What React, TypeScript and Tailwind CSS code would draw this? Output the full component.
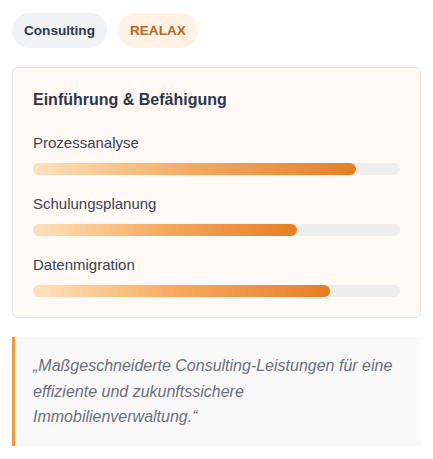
import React from "react";

const skills = [
  { name: "Prozessanalyse", value: 88 },
  { name: "Schulungsplanung", value: 72 },
  { name: "Datenmigration", value: 81 },
];

export default function App() {
  return (
    <div className="w-[433px] min-h-[459px] bg-white px-3 pt-[13px] font-['Liberation_Sans',Arial,sans-serif]">
      <div className="flex gap-[11px]">
        <span className="rounded-full bg-[#f1f2f4] px-3 py-2 text-[13.6px] leading-[19px] font-bold text-[#2d3748]">
          Consulting
        </span>
        <span className="rounded-full bg-[#fff3e6] px-3 py-2 text-[13.6px] leading-[19px] font-bold text-[#c0651a]">
          REALAX
        </span>
      </div>

      <div className="mt-[19px] rounded-md border border-[#e6e6e6] bg-[#fffaf6] p-5">
        <h3 className="text-base leading-6 font-bold text-[#2d3748]">Einführung &amp; Befähigung</h3>
        <div className="mt-5 flex flex-col gap-[18px]">
          {skills.map((s) => (
            <div key={s.name}>
              <div className="text-[15px] leading-[22px] text-[#3a4150]">{s.name}</div>
              <div className="mt-[9px] h-3 w-full rounded-full bg-[#eeeeee]">
                <div
                  className="h-3 rounded-full bg-gradient-to-r from-[#fde2bd] via-[#f5a85c] to-[#e67e22]"
                  style={{ width: `${s.value}%` }}
                />
              </div>
            </div>
          ))}
        </div>
      </div>

      <blockquote className="mt-[19px] border-l-[3px] border-[#f0963c] bg-[#f9f9f9] py-4 pl-[18px] pr-4 text-base leading-[25.6px] italic text-[#6b6f7a]">
        „Maßgeschneiderte Consulting-Leistungen für eine effiziente und zukunftssichere Immobilienverwaltung.“
      </blockquote>
    </div>
  );
}
